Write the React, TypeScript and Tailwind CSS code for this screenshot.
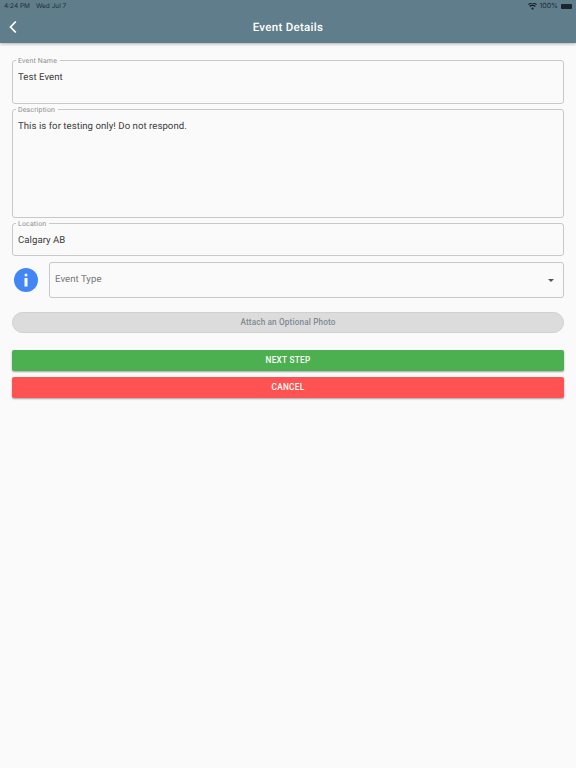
import React from 'react';

interface OutlinedFieldProps {
  label: string;
  value: string;
  boxClass: string;
}

const OutlinedField: React.FC<OutlinedFieldProps> = ({ label, value, boxClass }) => (
  <fieldset className={`border border-[#c8c8c8] rounded-[3px] px-[5px] min-w-0 ${boxClass}`}>
    <legend className="-ml-[2px] pl-[2px] pr-[3px] text-[7px] leading-[9px] text-[#8f8f8f] tracking-[0.15px]">
      <span className="relative top-[1px]">{label}</span>
    </legend>
    <div className="text-[9.6px] leading-[14px] text-[#3a3a3a] tracking-[0.05px] pt-[6px]">{value}</div>
  </fieldset>
);

const App: React.FC = () => {
  return (
    <div className="w-[576px] h-[768px] bg-[#fafafa] font-['Roboto',sans-serif] antialiased [text-rendering:geometricPrecision] flex flex-col overflow-hidden">
      <header className="h-[43px] bg-[#607d8b] shadow-[0_1px_3px_rgba(0,0,0,0.3)] flex flex-col shrink-0">
        <div className="h-[11px] pl-[4px] pr-[4px] pt-[2px] flex items-center justify-between text-[6.5px] text-[#1f2d35] font-['Inter',sans-serif]">
          <div className="flex gap-[6px]">
            <span>4:24 PM</span>
            <span>Wed Jul 7</span>
          </div>
          <div className="flex items-center gap-[2px]">
            <svg width="9" height="7" viewBox="0 0 24 18" fill="#1a262d">
              <path d="M12 18l-3.6-4.5a5.6 5.6 0 0 1 7.2 0zM5.6 10l-2.3-2.8a13.5 13.5 0 0 1 17.4 0L18.4 10a10 10 0 0 0-12.8 0zM1.6 5L0 3a19 19 0 0 1 24 0l-1.6 2a16.4 16.4 0 0 0-20.8 0z" />
            </svg>
            <span className="text-[7px]">100%</span>
            <span className="ml-[1px] w-[11px] h-[5px] bg-[#1a262d] rounded-[1px]" />
          </div>
        </div>
        <div className="relative flex-1 flex items-center justify-center pt-[1px]">
          <svg className="absolute left-[8px] top-[9px]" width="10" height="14" viewBox="0 0 10 14" fill="none" stroke="#ffffff" strokeWidth="1.8">
            <path d="M7.8 1.5 L2.5 7 L7.8 12.5" />
          </svg>
          <h1 className="text-[11.5px] font-medium text-white tracking-[0.3px]">Event Details</h1>
        </div>
      </header>

      <main className="flex flex-col px-[12px] pt-[13px]">
        <OutlinedField label="Event Name" value="Test Event" boxClass="h-[48px]" />
        <OutlinedField label="Description" value="This is for testing only! Do not respond." boxClass="h-[113px] mt-[1px]" />
        <OutlinedField label="Location" value="Calgary AB" boxClass="h-[37px] mt-[1px]" />

        <div className="flex items-center mt-[6px]">
          <div className="w-[37px] shrink-0 pl-[2px]">
            <div className="w-[24px] h-[24px] rounded-full bg-[#4285f4] flex items-center justify-center">
              <svg width="6" height="14" viewBox="0 0 6 14" fill="#ffffff">
                <rect x="1.5" y="0.5" width="3" height="3" rx="1.5" />
                <rect x="1.5" y="5" width="3" height="8.5" />
              </svg>
            </div>
          </div>
          <div className="flex-1 h-[36px] border border-[#c8c8c8] rounded-[3px] flex items-center justify-between pl-[5px] pr-[9px]">
            <span className="text-[9.6px] text-[#777777] tracking-[0.05px] pt-[1px]">Event Type</span>
            <span className="w-0 h-0 border-x-[3px] border-x-transparent border-t-[3px] border-t-[#555555]" />
          </div>
        </div>

        <button className="mt-[14px] h-[21px] rounded-full border border-[#d0d0d0] bg-[#dcdcdc] text-[8.2px] font-medium text-[#7c8a91] tracking-[0.15px] flex items-center justify-center">
          Attach an Optional Photo
        </button>

        <button className="mt-[17px] h-[21px] rounded-[2px] bg-[#4caf50] shadow-[0_1px_2px_rgba(0,0,0,0.35)] text-[8.2px] font-medium text-white tracking-[0.3px] flex items-center justify-center">
          NEXT STEP
        </button>
        <button className="mt-[6px] h-[21px] rounded-[2px] bg-[#ff5252] shadow-[0_1px_2px_rgba(0,0,0,0.35)] text-[8.2px] font-medium text-white tracking-[0.3px] flex items-center justify-center">
          CANCEL
        </button>
      </main>
    </div>
  );
};

export default App;
